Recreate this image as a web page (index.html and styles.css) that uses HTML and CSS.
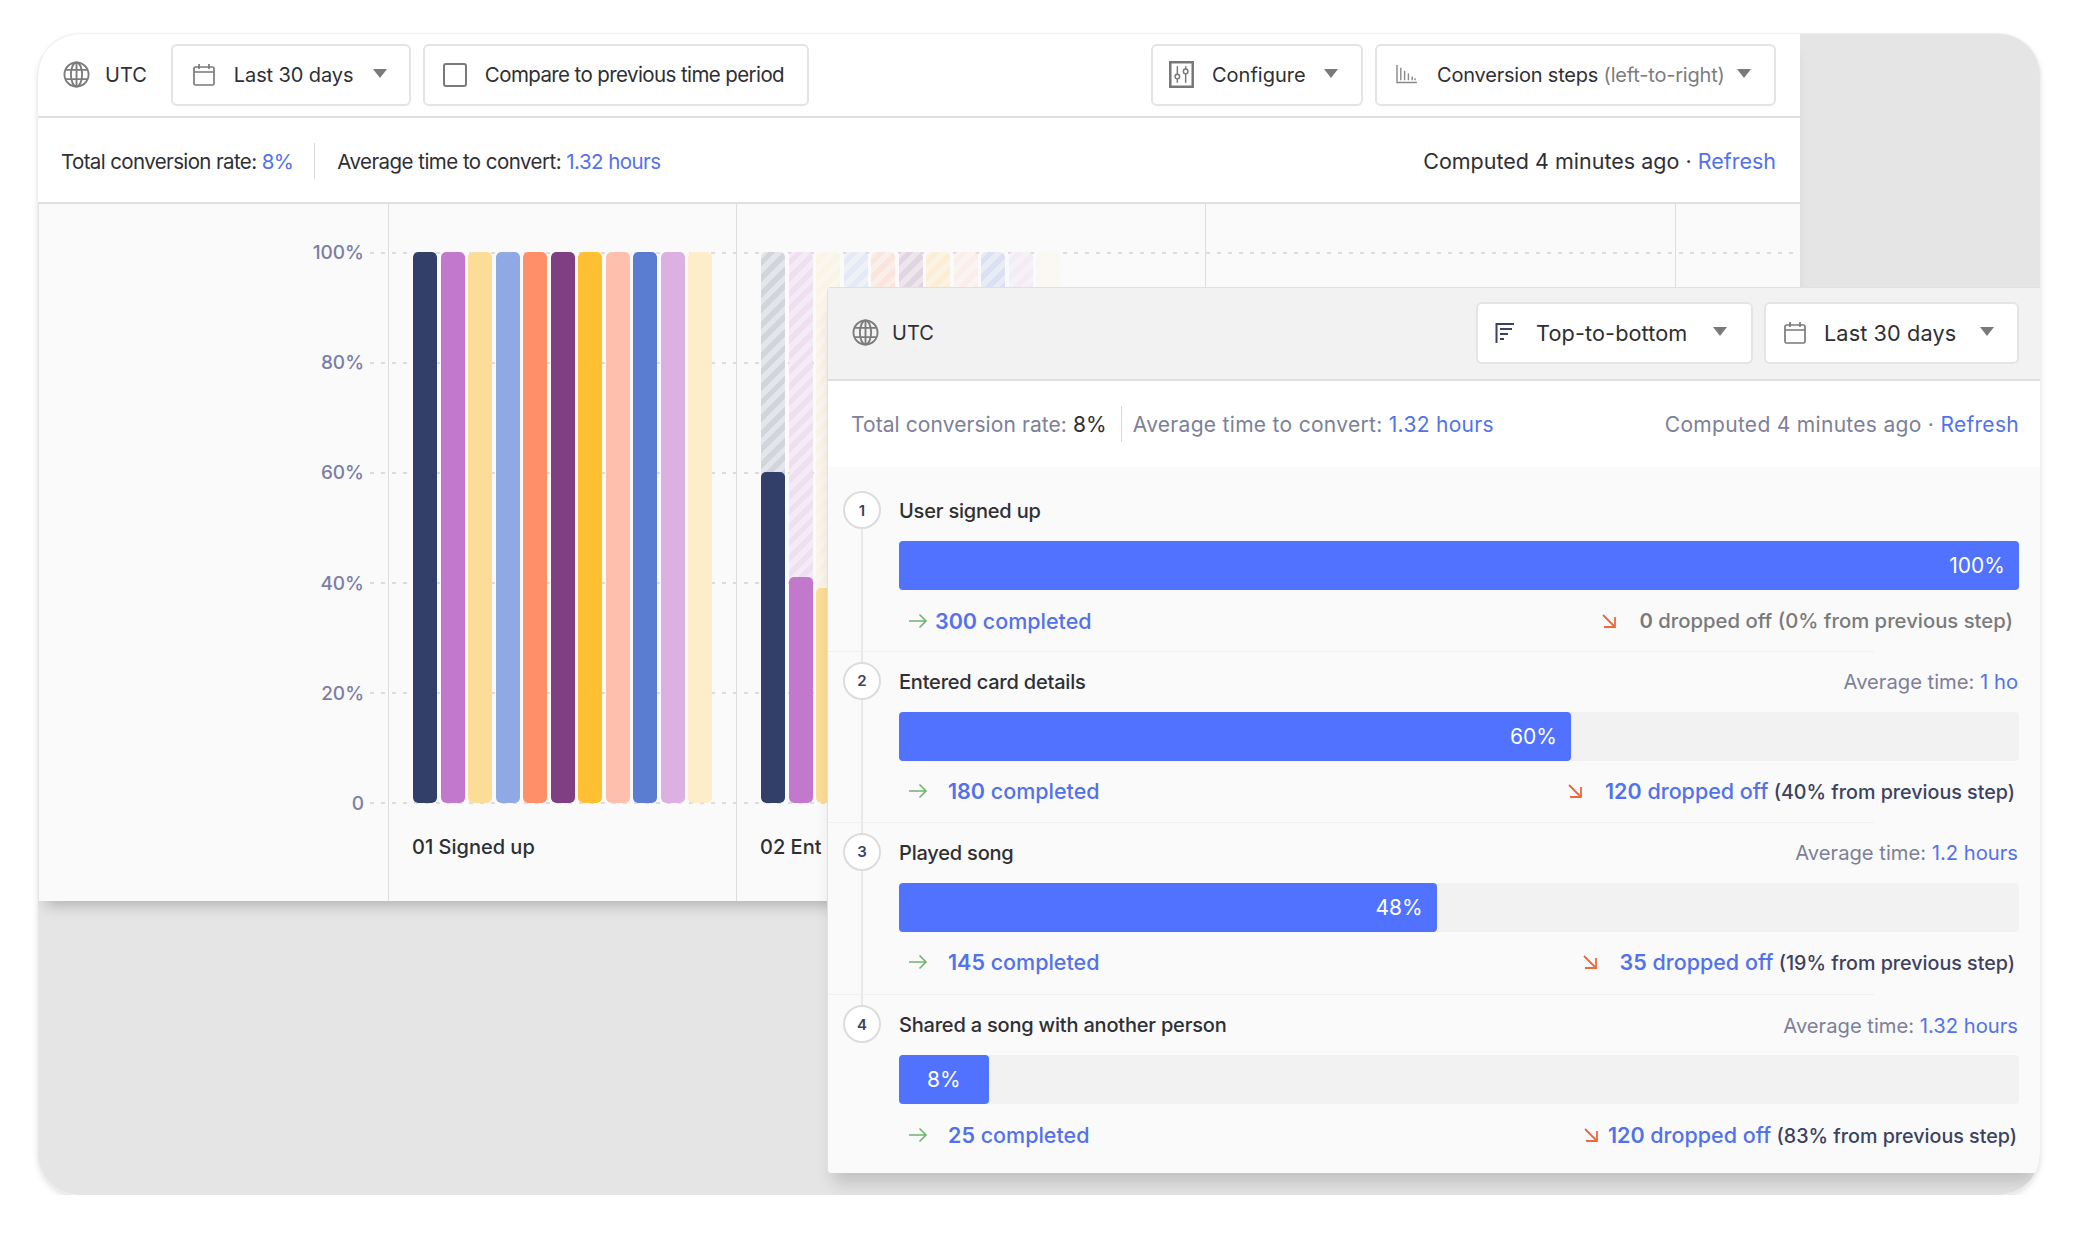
FILE: index.html
```html
<!DOCTYPE html>
<html>
<head lang="en">
    <meta charset="UTF-8">
    <title>Funnel</title>
    <link rel="stylesheet" href="styles.css">
</head>
<body>
<svg class="defs" width="0" height="0">
    <symbol id="globe" viewBox="0 0 26 26">
        <g fill="none" stroke="currentColor" stroke-width="1.8">
            <circle cx="13" cy="13" r="11.6"/>
            <ellipse cx="13" cy="13" rx="5.4" ry="11.6"/>
            <path d="M13 1.4v23.2M2.4 8.6h21.2M2.4 17.4h21.2"/>
        </g>
    </symbol>
    <symbol id="calendar" viewBox="0 0 22 22">
        <g fill="none" stroke="currentColor" stroke-width="1.7">
            <rect x="1" y="3" width="20" height="18" rx="1.5"/>
            <path d="M1 8h20M6 0v5M16 0v5"/>
        </g>
    </symbol>
    <symbol id="sliders" viewBox="0 0 24 26">
        <g fill="none" stroke="currentColor">
            <rect x="1.2" y="1.2" width="21.6" height="23.6" stroke-width="2.4"/>
            <path d="M8 5v16M16 5v16" stroke-width="1.4"/>
            <circle cx="8" cy="15" r="2.2" fill="#fff" stroke-width="1.4"/>
            <circle cx="16" cy="10" r="2.2" fill="#fff" stroke-width="1.4"/>
        </g>
    </symbol>
    <symbol id="steps" viewBox="0 0 22 20">
        <g fill="none" stroke="currentColor" stroke-width="1.5">
            <path d="M1 0v18.5h21"/>
            <path d="M5 3v13M9 6v10M13 9v7M17 12v4M20 14v2"/>
        </g>
    </symbol>
    <symbol id="sort" viewBox="0 0 20 22">
        <g fill="none" stroke="#3c4160" stroke-width="2">
            <path d="M1.5 1v20M1 2h18M5 7h12M5 12h8M5 17h4"/>
        </g>
    </symbol>
    <symbol id="right" viewBox="0 0 20 16">
        <path d="M1 8h17M11.500 1.500L18 8l-6.500 6.500" fill="none" stroke="currentColor" stroke-width="1.6"/>
    </symbol>
    <symbol id="drop" viewBox="0 0 16 16">
        <path d="M2 2l12 12M14 4v10H3" fill="none" stroke="currentColor" stroke-width="1.8"/>
    </symbol>
</svg>

<div class="frame">
    <div class="back">
        <div class="toolbar">
            <svg class="globe"><use href="#globe"/></svg>
            <span class="utc">UTC</span>
            <div class="btn date-btn">
                <svg class="ico-cal"><use href="#calendar"/></svg>
                <span>Last 30 days</span>
                <i class="caret"></i>
            </div>
            <div class="btn compare-btn">
                <i class="check"></i>
                <span>Compare to previous time period</span>
            </div>
            <div class="btn cfg-btn">
                <svg class="ico-cfg"><use href="#sliders"/></svg>
                <span>Configure</span>
                <i class="caret"></i>
            </div>
            <div class="btn steps-btn">
                <svg class="ico-steps"><use href="#steps"/></svg>
                <span>Conversion steps <em>(left-to-right)</em></span>
                <i class="caret"></i>
            </div>
        </div>
        <div class="summary">
            <span class="tight-text">Total conversion rate: <a>8%</a></span>
            <i class="divider"></i>
            <span class="tight-text wider">Average time to convert: <a>1.32 hours</a></span>
            <span class="computed">Computed 4 minutes ago · <a>Refresh</a></span>
        </div>
        <div class="chart">
            <div class="grid">
                <i></i><i></i><i></i><i></i><i></i><i></i>
            </div>
            <div class="axis">
                <span>100%</span><span>80%</span><span>60%</span><span>40%</span><span>20%</span><span>0</span>
            </div>
            <div class="col col1">
                <div class="bars">
                    <div class="bar c1"><b style="height:100%"></b></div>
                    <div class="bar c2"><b style="height:100%"></b></div>
                    <div class="bar c3"><b style="height:100%"></b></div>
                    <div class="bar c4"><b style="height:100%"></b></div>
                    <div class="bar c5"><b style="height:100%"></b></div>
                    <div class="bar c6"><b style="height:100%"></b></div>
                    <div class="bar c7"><b style="height:100%"></b></div>
                    <div class="bar c8"><b style="height:100%"></b></div>
                    <div class="bar c9"><b style="height:100%"></b></div>
                    <div class="bar c10"><b style="height:100%"></b></div>
                    <div class="bar c11"><b style="height:100%"></b></div>
                </div>
                <div class="col-label">01 Signed up</div>
            </div>
            <div class="col col2">
                <div class="bars">
                    <div class="bar c1"><b style="height:60%"></b></div>
                    <div class="bar c2"><b style="height:41%"></b></div>
                    <div class="bar c3"><b style="height:39%"></b></div>
                    <div class="bar c4"><b style="height:45%"></b></div>
                    <div class="bar c5"><b style="height:38%"></b></div>
                    <div class="bar c6"><b style="height:52%"></b></div>
                    <div class="bar c7"><b style="height:30%"></b></div>
                    <div class="bar c8"><b style="height:42%"></b></div>
                    <div class="bar c9"><b style="height:36%"></b></div>
                    <div class="bar c10"><b style="height:33%"></b></div>
                    <div class="bar c11"><b style="height:28%"></b></div>
                </div>
                <div class="col-label">02 Ent</div>
            </div>
            <div class="col col3"></div>
            <div class="col col4"></div>
        </div>
    </div>

    <div class="front">
        <div class="front-head">
            <svg class="globe"><use href="#globe"/></svg>
            <span class="utc">UTC</span>
            <div class="btn order-btn">
                <svg class="ico-sort"><use href="#sort"/></svg>
                <span>Top-to-bottom</span>
                <i class="caret"></i>
            </div>
            <div class="btn range-btn">
                <svg class="ico-cal"><use href="#calendar"/></svg>
                <span>Last 30 days</span>
                <i class="caret"></i>
            </div>
        </div>
        <div class="front-sum">
            <span class="rate">Total conversion rate: <strong>8%</strong></span>
            <i class="divider"></i>
            <span>Average time to convert: <a>1.32 hours</a></span>
            <span class="computed">Computed 4 minutes ago · <a>Refresh</a></span>
        </div>
        <div class="steps">
            <i class="rail"></i>

            <div class="step first">
                <div class="num">1</div>
                <div class="body">
                    <div class="title"><span>User signed up</span></div>
                    <div class="track"><div class="fill" style="width:100%">100%</div></div>
                    <div class="stats">
                        <span class="done near"><svg class="arrow"><use href="#right"/></svg><a><b>300</b> completed</a></span>
                        <span class="off muted"><svg class="arrow-d"><use href="#drop"/></svg><span><b>0</b> dropped off (0% from previous step)</span></span>
                    </div>
                </div>
            </div>

            <div class="step">
                <div class="num">2</div>
                <div class="body">
                    <div class="title"><span>Entered card details</span><span class="avg">Average time: <a>1 ho</a></span></div>
                    <div class="track"><div class="fill" style="width:60%">60%</div></div>
                    <div class="stats">
                        <span class="done"><svg class="arrow"><use href="#right"/></svg><a><b>180</b> completed</a></span>
                        <span class="off"><svg class="arrow-d"><use href="#drop"/></svg><span><a><b>120</b> dropped off</a> <small>(40% from previous step)</small></span></span>
                    </div>
                </div>
            </div>

            <div class="step third">
                <div class="num">3</div>
                <div class="body">
                    <div class="title"><span>Played song</span><span class="avg">Average time: <a>1.2 hours</a></span></div>
                    <div class="track"><div class="fill" style="width:48%">48%</div></div>
                    <div class="stats">
                        <span class="done"><svg class="arrow"><use href="#right"/></svg><a><b>145</b> completed</a></span>
                        <span class="off"><svg class="arrow-d"><use href="#drop"/></svg><span><a><b>35</b> dropped off</a> <small>(19% from previous step)</small></span></span>
                    </div>
                </div>
            </div>

            <div class="step">
                <div class="num">4</div>
                <div class="body">
                    <div class="title"><span>Shared a song with another person</span><span class="avg">Average time: <a>1.32 hours</a></span></div>
                    <div class="track"><div class="fill small" style="width:8%">8%</div></div>
                    <div class="stats">
                        <span class="done"><svg class="arrow"><use href="#right"/></svg><a><b>25</b> completed</a></span>
                        <span class="off tight"><svg class="arrow-d"><use href="#drop"/></svg><span><a><b>120</b> dropped off</a> <small>(83% from previous step)</small></span></span>
                    </div>
                </div>
            </div>
        </div>
    </div>
</div>
</body>
</html>
```

FILE: styles.css
```css
*{
    margin:0;
    padding:0;
    box-sizing:border-box;
}
body{
    background:#fff;
    font-family:Inter,"Liberation Sans",sans-serif;
    font-size:20px;
    color:#2f2f33;
    padding:34px 0 0 38px;
}
a{
    color:#5272ec;
}
i,em{
    font-style:normal;
}
.defs{
    position:absolute;
}
.frame{
    position:relative;
    width:2002px;
    height:1161px;
    background:#e5e5e5;
    border-radius:42px;
    overflow:hidden;
    box-shadow:0 0 0 1px #efefef,0 3px 6px rgba(0,0,0,.14);
}

/* back panel */
.back{
    width:1762px;
    height:867px;
    display:flex;
    flex-direction:column;
    background:#fff;
    box-shadow:0 12px 14px -8px rgba(0,0,0,.24);
}
.toolbar{
    height:84px;
    flex:none;
    display:flex;
    align-items:center;
    padding:0 24px 1px 25px;
    border-bottom:2px solid #dfdfdf;
}
.globe{
    width:27px;
    height:27px;
    color:#7c7c7c;
}
.utc{
    margin-left:15px;
}
.btn{
    height:62px;
    display:flex;
    align-items:center;
    background:#fff;
    border:2px solid #e4e4e4;
    border-radius:6px;
}
.caret{
    width:0;
    height:0;
    border-left:7px solid transparent;
    border-right:7px solid transparent;
    border-top:9px solid #7a7a7a;
    margin-bottom:3px;
}
.ico-cal{
    width:22px;
    height:22px;
    color:#7a7a7a;
}
.date-btn{
    width:240px;
    margin-left:24px;
    padding-left:20px;
    letter-spacing:-.1px;
}
.date-btn .ico-cal{
    margin-right:19px;
}
.date-btn .caret{
    margin-left:20px;
}
.compare-btn{
    width:386px;
    margin-left:12px;
    padding-left:18px;
    font-size:20.5px;
    letter-spacing:-.6px;
}
.check{
    width:24px;
    height:24px;
    border:2px solid #7a7a7a;
    border-radius:3px;
    margin-right:18px;
}
.cfg-btn{
    width:212px;
    margin-left:auto;
    padding-left:16px;
}
.ico-cfg{
    width:25px;
    height:27px;
    color:#777;
    margin-right:18px;
}
.cfg-btn .caret{
    margin-left:18px;
}
.steps-btn{
    width:401px;
    margin-left:12px;
    padding-left:19px;
    letter-spacing:-.2px;
}
.ico-steps{
    width:21px;
    height:19px;
    color:#8a8a8a;
    margin-right:20px;
}
.steps-btn em{
    color:#7d7d7d;
}
.steps-btn .caret{
    margin-left:12px;
}
.summary{
    height:86px;
    flex:none;
    display:flex;
    align-items:center;
    padding:2px 24px 0 23px;
    border-bottom:2px solid #e0e0e0;
}
.tight-text{
    font-size:20.5px;
    letter-spacing:-.62px;
}
.tight-text.wider{
    letter-spacing:-.54px;
}
.summary .computed{
    font-size:21.5px;
}
.divider{
    width:1px;
    height:36px;
    background:#d9d9d9;
    margin:0 22px 0 21px;
}
.computed{
    margin-left:auto;
}

/* chart */
.chart{
    flex:1;
    position:relative;
    display:flex;
    background:#fafafa;
    border-left:1px solid #e4e4e4;
}
.grid{
    position:absolute;
    left:331px;
    right:0;
    top:48px;
    height:552px;
    display:flex;
    flex-direction:column;
    justify-content:space-between;
}
.grid i{
    height:2px;
    background:repeating-linear-gradient(90deg,#dcdcdc 0,#dcdcdc 4px,transparent 4px,transparent 11px);
}
.axis{
    position:relative;
    width:349px;
    height:552px;
    margin-top:48px;
    padding-right:24px;
    display:flex;
    flex-direction:column;
    justify-content:space-between;
    align-items:flex-end;
    color:#7b7ea6;
    font-size:19px;
    font-weight:500;
}
.axis span{
    height:0;
    display:flex;
    align-items:center;
}
.col{
    position:relative;
    border-left:1px solid #dedede;
    padding:48px 0 0 24px;
}
.col1{
    width:348px;
}
.col2{
    width:469px;
}
.col3{
    width:470px;
}
.col4{
    flex:1;
}
.bars{
    height:551px;
    display:flex;
    gap:3.5px;
}
.bar{
    position:relative;
    width:24px;
    height:100%;
    display:flex;
    align-items:flex-end;
    border-radius:5px;
    overflow:hidden;
    background:repeating-linear-gradient(-45deg,color-mix(in srgb,var(--c) 20%,#fafafa) 0,color-mix(in srgb,var(--c) 20%,#fafafa) 5.500px,color-mix(in srgb,var(--c) 11%,#fafafa) 5.500px,color-mix(in srgb,var(--c) 11%,#fafafa) 11px);
}
.bar b{
    position:relative;
    display:block;
    width:100%;
    background:var(--c);
    border-radius:5px;
}
.c1{--c:#323f68;}
.c2{--c:#c278cd;}
.c3{--c:#fbdd98;}
.c4{--c:#8ea9e3;}
.c5{--c:#ff8f69;}
.c6{--c:#7f3f82;}
.c7{--c:#ffc034;}
.c8{--c:#ffbfac;}
.c9{--c:#5a7cd1;}
.c10{--c:#dcb1e2;}
.c11{--c:#fdedc8;}
.col-label{
    margin:31px 0 0 -1px;
    line-height:26px;
    font-weight:500;
    white-space:nowrap;
}

/* front panel */
.front{
    position:absolute;
    left:789px;
    top:253px;
    right:0;
    height:886px;
    display:flex;
    flex-direction:column;
    background:#fafafa;
    border:1px solid #e0e0e0;
    border-width:1px 0 0 1px;
    border-radius:4px 0 0 4px;
    box-shadow:0 16px 16px -6px rgba(0,0,0,.16);
}
.front-head{
    height:93px;
    flex:none;
    display:flex;
    align-items:center;
    padding:0 21px 2px 24px;
    background:#f2f2f2;
    border-bottom:2px solid #dfdfdf;
}
.front-head .utc{
    margin-left:13px;
}
.front-head .btn{
    font-size:21.7px;
}
.order-btn{
    width:277px;
    margin-left:auto;
    padding-left:17px;
    letter-spacing:.1px;
}
.ico-sort{
    width:20px;
    height:22px;
    margin-right:21px;
}
.order-btn .caret{
    margin-left:26px;
}
.range-btn{
    width:255px;
    margin-left:11px;
    padding-left:18px;
    letter-spacing:.1px;
}
.range-btn .ico-cal{
    margin-right:18px;
}
.range-btn .caret{
    margin-left:24px;
}
.front-sum{
    height:86px;
    flex:none;
    display:flex;
    align-items:center;
    padding:0 21px 0 23px;
    background:#fff;
    color:#7d8098;
    font-size:21px;
    letter-spacing:.3px;
}
.front-sum .rate{
    letter-spacing:.08px;
}
.front-sum strong{
    font-weight:400;
    color:#2f2f33;
}
.front-sum .divider{
    margin:0 11px 0 14px;
}
.steps{
    position:relative;
    flex:1;
}
.rail{
    position:absolute;
    left:33px;
    top:50px;
    bottom:160px;
    width:2px;
    background:#e8e8e8;
}
.step{
    position:relative;
    display:flex;
    padding:18px 21px 17.3px 15px;
}
.step:before{
    content:"";
    position:absolute;
    left:0;
    top:0;
    width:1046px;
    height:1px;
    background:#f0f0f0;
}
.step.first{
    padding-top:31px;
}
.step.first:before{
    display:none;
}
.step.third{
    padding-bottom:19px;
}
.num{
    width:38px;
    height:38px;
    flex:none;
    position:relative;
    margin:-7px 18px 0 0;
    display:flex;
    align-items:center;
    justify-content:center;
    border:2px solid #dcdcdc;
    border-radius:50%;
    background:#fff;
    color:#3c4160;
    font-size:15px;
    font-weight:600;
}
.body{
    flex:1;
    min-width:0;
}
.title{
    height:26px;
    display:flex;
    justify-content:space-between;
    align-items:center;
    font-weight:500;
    letter-spacing:-.2px;
}
.avg{
    font-weight:400;
    color:#7d8098;
    font-size:20.2px;
    letter-spacing:0;
    margin-right:1px;
}
.track{
    height:49px;
    margin-top:17px;
    background:#f2f2f2;
    border-radius:4px;
}
.fill{
    height:100%;
    display:flex;
    align-items:center;
    justify-content:flex-end;
    padding-right:14px;
    background:#5072ff;
    border-radius:4px;
    color:#fff;
    font-size:21px;
}
.fill.small{
    justify-content:center;
    padding-right:0;
}
.stats{
    height:26px;
    margin-top:17.500px;
    display:flex;
    justify-content:space-between;
    align-items:center;
    color:#3c4160;
    font-weight:500;
}
.stats a{
    font-size:21.5px;
}
.stats small{
    font-size:19.7px;
}
.stats b{
    font-weight:600;
}
.done,.off{
    display:flex;
    align-items:center;
}
.done{
    margin-left:9px;
}
.arrow{
    width:20px;
    height:16px;
    margin-right:20px;
    color:#6fb56f;
}
.near .arrow{
    margin-right:7px;
}
.off{
    margin-right:4px;
}
.arrow-d{
    width:16px;
    height:16px;
    margin-right:22px;
    color:#f0683a;
}
.tight .arrow-d{
    margin-right:9px;
}
.tight{
    margin-right:2px;
}
.muted{
    color:#7a7a7a;
    margin-right:6px;
    font-size:20.3px;
}
```
